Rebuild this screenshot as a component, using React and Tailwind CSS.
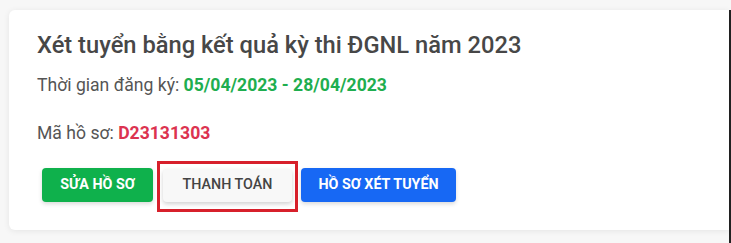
import React from 'react';

const App = () => {
  return (
    <div className="h-[243px] w-[731px] overflow-hidden bg-[#f7f7f7] pl-[9px] pt-[10px] font-['Roboto',sans-serif]">
      <div className="flex h-[233px] border-r-2 border-[#222]">
        <div className="h-[220px] flex-1 rounded-l-md bg-white px-[28px] pt-[21px] shadow-[0_1px_6px_rgba(0,0,0,0.08)]">
          <h2 className="text-[23.7px] font-medium leading-[28px] text-[#474747]">
            Xét tuyển bằng kết quả kỳ thi ĐGNL năm 2023
          </h2>
          <p className="mt-[15px] text-[17.6px] leading-[22px] text-[#555]">
            Thời gian đăng ký: <span className="font-bold text-[#1fae4f]">05/04/2023 - 28/04/2023</span>
          </p>
          <p className="mt-[26px] text-[17.6px] leading-[22px] text-[#555]">
            Mã hồ sơ: <span className="font-bold text-[#dc3350]">D23131303</span>
          </p>
          <div className="mt-[24px] flex items-center gap-[10px] pl-[5px]">
            <button className="h-[34px] w-[111px] rounded-[4px] bg-[#0fb14c] text-[14.3px] font-bold uppercase text-white shadow-[0_2px_4px_rgba(0,0,0,0.15)]">
              Sửa hồ sơ
            </button>
            <div className="relative">
              <button className="h-[33px] w-[129px] rounded-[4px] bg-[#f8f8f8] text-[14.3px] font-medium uppercase text-[#444] shadow-[0_2px_4px_rgba(0,0,0,0.18)]">
                Thanh toán
              </button>
              <div className="pointer-events-none absolute -left-[6px] -right-[6px] -top-[8px] -bottom-[10px] border-[3px] border-[#d7202b]"></div>
            </div>
            <button className="-ml-px h-[34px] w-[155px] rounded-[4px] bg-[#1768f4] text-[14.3px] font-bold uppercase text-white shadow-[0_2px_4px_rgba(0,0,0,0.15)]">
              Hồ sơ xét tuyển
            </button>
          </div>
        </div>
      </div>
    </div>
  );
};

export default App;
